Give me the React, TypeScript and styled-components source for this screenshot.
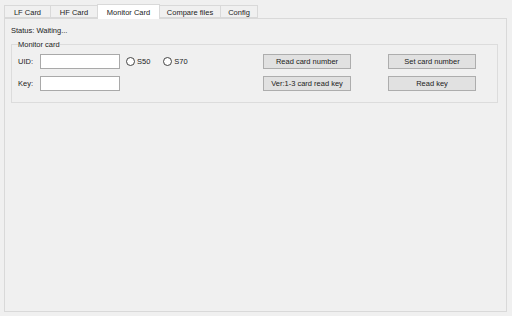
import React from 'react'
import styled, { createGlobalStyle } from 'styled-components'

const Global = createGlobalStyle`
  html, body {
    margin: 0;
    padding: 0;
    background: #f0f0f0;
  }
  body {
    font-family: "Liberation Sans", Arial, sans-serif;
    font-size: 7.5px;
    color: #222;
  }
`

const Window = styled.div`
  width: 512px;
  height: 316px;
  padding: 4px 5px 4px 4px;
  box-sizing: border-box;
  display: flex;
  flex-direction: column;
`

const TabStrip = styled.div`
  display: flex;
  align-items: flex-end;
  height: 14px;
  position: relative;
  z-index: 1;
`

const Tab = styled.div<{ $active?: boolean; $width: number }>`
  width: ${p => p.$width}px;
  box-sizing: border-box;
  height: ${p => (p.$active ? 15 : 13)}px;
  margin-bottom: ${p => (p.$active ? -1 : 0)}px;
  margin-right: -1px;
  background: ${p => (p.$active ? '#ffffff' : '#f0f0f0')};
  border: 1px solid #d9d9d9;
  border-bottom: ${p => (p.$active ? 'none' : '1px solid #d9d9d9')};
  display: flex;
  align-items: center;
  justify-content: center;
  white-space: nowrap;
  padding-top: ${p => (p.$active ? 0 : 1)}px;
`

const Panel = styled.div`
  flex: 1;
  border: 1px solid #d9d9d9;
  background: #f0f0f0;
  padding: 6px 8px 0 6px;
  display: flex;
  flex-direction: column;
`

const Status = styled.div`
  height: 12px;
  line-height: 12px;
  margin-bottom: 3px;
`

const Group = styled.fieldset`
  margin: 0;
  border: 1px solid #dcdcdc;
  padding: 5px 6px 11px 6px;
  display: grid;
  grid-template-columns: 22px 80px 143px 88px 37px 88px;
  grid-auto-rows: 15px;
  row-gap: 7px;
  align-items: center;
`

const Legend = styled.legend`
  padding: 0;
  margin-left: 0;
  font-size: 7.5px;
`

const Label = styled.span`
  padding-left: 0;
`

const Input = styled.input`
  box-sizing: border-box;
  width: 80px;
  height: 15px;
  border: 1px solid #a9a9a9;
  background: #fff;
  margin: 0;
  padding: 0 2px;
  font: inherit;
`

const Radios = styled.div`
  display: flex;
  align-items: center;
  padding-left: 6px;
  gap: 13px;
`

const Radio = styled.label`
  display: flex;
  align-items: center;
  gap: 2px;
`

const Circle = styled.span`
  width: 7px;
  height: 7px;
  border: 1px solid #444;
  border-radius: 50%;
  background: #fff;
`

const Button = styled.button<{ $col: number }>`
  grid-column: ${p => p.$col};
  box-sizing: border-box;
  width: 88px;
  height: 15px;
  margin: 0;
  padding: 0;
  border: 1px solid #adadad;
  background: #e1e1e1;
  font-family: inherit;
  font-size: 7.5px;
  color: #222;
  white-space: nowrap;
`

const tabs = [
  { name: 'LF Card', w: 47 },
  { name: 'HF Card', w: 48 },
  { name: 'Monitor Card', w: 63 },
  { name: 'Compare files', w: 62 },
  { name: 'Config', w: 38 },
]

const App: React.FC = () => {
  return (
    <Window>
      <Global />
      <TabStrip>
        {tabs.map(t => (
          <Tab key={t.name} $width={t.w} $active={t.name === 'Monitor Card'}>
            {t.name}
          </Tab>
        ))}
      </TabStrip>
      <Panel>
        <Status>Status: Waiting...</Status>
        <Group>
          <Legend>Monitor card</Legend>
          <Label>UID:</Label>
          <Input />
          <Radios>
            <Radio><Circle />S50</Radio>
            <Radio><Circle />S70</Radio>
          </Radios>
          <Button $col={4}>Read card number</Button>
          <Button $col={6}>Set card number</Button>
          <Label>Key:</Label>
          <Input />
          <span />
          <Button $col={4}>Ver:1-3 card read key</Button>
          <Button $col={6}>Read key</Button>
        </Group>
      </Panel>
    </Window>
  )
}

export default App
